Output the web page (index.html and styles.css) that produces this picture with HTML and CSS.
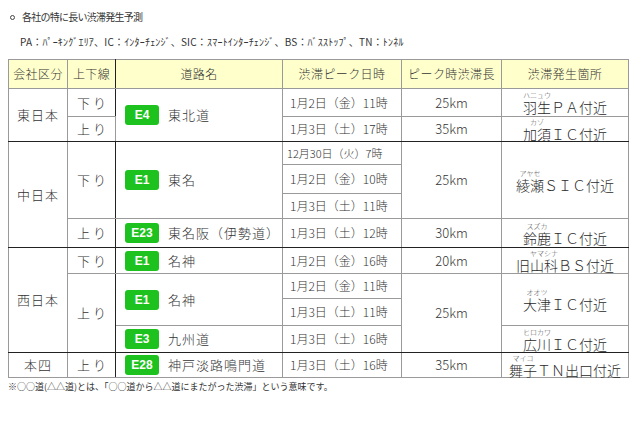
FILE: index.html
```html
<!DOCTYPE html>
<html lang="ja">
<head>
<meta charset="utf-8">
<title>各社の特に長い渋滞発生予測</title>
<link rel="stylesheet" href="styles.css">
</head>
<body>
<p class="title"><span class="bullet"></span>各社の特に長い渋滞発生予測</p>
<p class="legend">PA：ﾊﾟｰｷﾝｸﾞｴﾘｱ、IC：ｲﾝﾀｰﾁｪﾝｼﾞ、SIC：ｽﾏｰﾄｲﾝﾀｰﾁｪﾝｼﾞ、BS：ﾊﾞｽｽﾄｯﾌﾟ、TN：ﾄﾝﾈﾙ</p>
<table class="jam">
  <colgroup>
    <col class="c-co"><col class="c-dir"><col class="c-road"><col class="c-date"><col class="c-len"><col class="c-loc">
  </colgroup>
  <thead>
    <tr class="h29">
      <th>会社区分</th><th class="dir">上下線</th><th>道路名</th><th>渋滞ピーク日時</th><th>ピーク時渋滞長</th><th>渋滞発生箇所</th>
    </tr>
  </thead>
  <tbody>
    <tr class="h28">
      <td rowspan="2" class="co end">東日本</td>
      <td class="dir">下り</td>
      <td rowspan="2" class="road end"><span class="badge">E4</span><span class="name">東北道</span></td>
      <td class="date">1月2日（金）11時</td>
      <td class="len">25km</td>
      <td class="loc"><div class="place"><span class="furi"><span class="kana">ハニュウ</span><span class="base">羽生</span></span><span>ＰＡ付近</span></div></td>
    </tr>
    <tr class="h25 end-row">
      <td class="dir">上り</td>
      <td class="date">1月3日（土）17時</td>
      <td class="len">35km</td>
      <td class="loc"><div class="place"><span class="furi"><span class="kana">カゾ</span><span class="base">加須</span></span><span>ＩＣ付近</span></div></td>
    </tr>

    <tr class="h23">
      <td rowspan="4" class="co end">中日本</td>
      <td rowspan="3" class="dir">下り</td>
      <td rowspan="3" class="road"><span class="badge">E1</span><span class="name">東名</span></td>
      <td class="date small">12月30日（火）7時</td>
      <td rowspan="3" class="len">25km</td>
      <td rowspan="3" class="loc"><div class="place"><span class="furi"><span class="kana">アヤセ</span><span class="base">綾瀬</span></span><span>ＳＩＣ付近</span></div></td>
    </tr>
    <tr class="h29">
      <td class="date">1月2日（金）10時</td>
    </tr>
    <tr class="h25">
      <td class="date">1月3日（土）11時</td>
    </tr>
    <tr class="h29 end-row">
      <td class="dir">上り</td>
      <td class="road"><span class="badge">E23</span><span class="name">東名阪（伊勢道）</span></td>
      <td class="date">1月3日（土）12時</td>
      <td class="len">30km</td>
      <td class="loc"><div class="place"><span class="furi"><span class="kana">スズカ</span><span class="base">鈴鹿</span></span><span>ＩＣ付近</span></div></td>
    </tr>

    <tr class="h26">
      <td rowspan="4" class="co end">西日本</td>
      <td class="dir">下り</td>
      <td class="road"><span class="badge">E1</span><span class="name">名神</span></td>
      <td class="date">1月2日（金）16時</td>
      <td class="len">20km</td>
      <td class="loc"><div class="place"><span>旧</span><span class="furi"><span class="kana">ヤマシナ</span><span class="base">山科</span></span><span>ＢＳ付近</span></div></td>
    </tr>
    <tr class="h25">
      <td rowspan="3" class="dir end">上り</td>
      <td rowspan="2" class="road"><span class="badge">E1</span><span class="name">名神</span></td>
      <td class="date">1月2日（金）11時</td>
      <td rowspan="3" class="len end">25km</td>
      <td rowspan="2" class="loc"><div class="place"><span class="furi"><span class="kana">オオツ</span><span class="base">大津</span></span><span>ＩＣ付近</span></div></td>
    </tr>
    <tr class="h27">
      <td class="date">1月3日（土）11時</td>
    </tr>
    <tr class="h27 end-row">
      <td class="road"><span class="badge">E3</span><span class="name">九州道</span></td>
      <td class="date">1月3日（土）16時</td>
      <td class="loc"><div class="place"><span class="furi"><span class="kana">ヒロカワ</span><span class="base">広川</span></span><span>ＩＣ付近</span></div></td>
    </tr>

    <tr class="h25">
      <td class="co">本四</td>
      <td class="dir">上り</td>
      <td class="road"><span class="badge">E28</span><span class="name">神戸淡路鳴門道</span></td>
      <td class="date">1月3日（土）16時</td>
      <td class="len">35km</td>
      <td class="loc"><div class="place"><span class="furi"><span class="kana">マイコ</span><span class="base">舞子</span></span><span>ＴＮ出口付近</span></div></td>
    </tr>
  </tbody>
</table>
<p class="note">※○○道(△△道)とは、「○○道から△△道にまたがった渋滞」という意味です。</p>
</body>
</html>
```

FILE: styles.css
```css
* { box-sizing: border-box; }

body {
  margin: 0;
  background: #ffffff;
  color: #333333;
  font-family: "Noto Sans CJK JP", "Liberation Sans", sans-serif;
}

.title {
  margin: 0;
  padding: 10px 0 0 10px;
  font-size: 10px;
  line-height: 14px;
  letter-spacing: -0.75px;
  display: flex;
  align-items: center;
}

.bullet {
  width: 5px;
  height: 5px;
  border: 1px solid #444;
  border-radius: 50%;
  margin-right: 7px;
}

.legend {
  margin: 11px 0 0 20px;
  font-size: 10px;
  line-height: 14px;
  letter-spacing: 0.2px;
}

.jam {
  margin: 10px 0 0 8px;
  border-collapse: collapse;
  table-layout: fixed;
  width: 620px;
  font-size: 13px;
  font-weight: 300;
}

.c-co { width: 59px; }
.c-dir { width: 48px; }
.c-road { width: 167px; }
.c-date { width: 119px; }
.c-len { width: 100px; }
.c-loc { width: 127px; }

.jam th,
.jam td {
  border: 1px solid #9a9a9a;
  padding: 0;
  text-align: center;
  vertical-align: middle;
  font-weight: 300;
  line-height: 16px;
  white-space: nowrap;
}

.jam th {
  background: #ffffcc;
  font-size: 12px;
  letter-spacing: 0.4px;
}

.h23 { height: 23px; }
.h25 { height: 25px; }
.h26 { height: 26px; }
.h27 { height: 27px; }
.h28 { height: 28px; }
.h29 { height: 29px; }

.jam .dir {
  border-right: 1px solid #222;
  letter-spacing: 3px;
  padding-left: 3px;
}
.jam th.dir { letter-spacing: 0.4px; padding-left: 0; }

.jam .end,
.jam .end-row td { border-bottom: 1px solid #222; }

.co { letter-spacing: 1px; padding-left: 1px; }

.road {
  text-align: left !important;
  padding-left: 9px !important;
}

.badge {
  display: inline-block;
  width: 34px;
  height: 20px;
  margin-right: 9px;
  border-radius: 3px;
  background: #1ec21e;
  color: #ffffff;
  font-family: "Liberation Sans", Arial, sans-serif;
  font-weight: bold;
  font-size: 12px;
  line-height: 20px;
  text-align: center;
  vertical-align: middle;
}

.name {
  vertical-align: middle;
  letter-spacing: 1px;
}

.date {
  text-align: left !important;
  padding-left: 7px !important;
  font-size: 12px;
}
.date.small { font-size: 11px; padding-left: 4px !important; }

.len { font-size: 13px; }

.loc {
  font-size: 14px;
  color: #2a2a2a;
}

.place {
  display: flex;
  justify-content: center;
  align-items: flex-end;
  line-height: 14px;
  padding-top: 1px;
}

.furi {
  display: flex;
  flex-direction: column;
  align-items: center;
}

.kana {
  font-size: 7px;
  line-height: 7px;
  color: #555;
  margin-bottom: 1px;
}

.base { line-height: 14px; }

.note {
  margin: 3px 0 0 8px;
  font-size: 9px;
  line-height: 12px;
}
```
